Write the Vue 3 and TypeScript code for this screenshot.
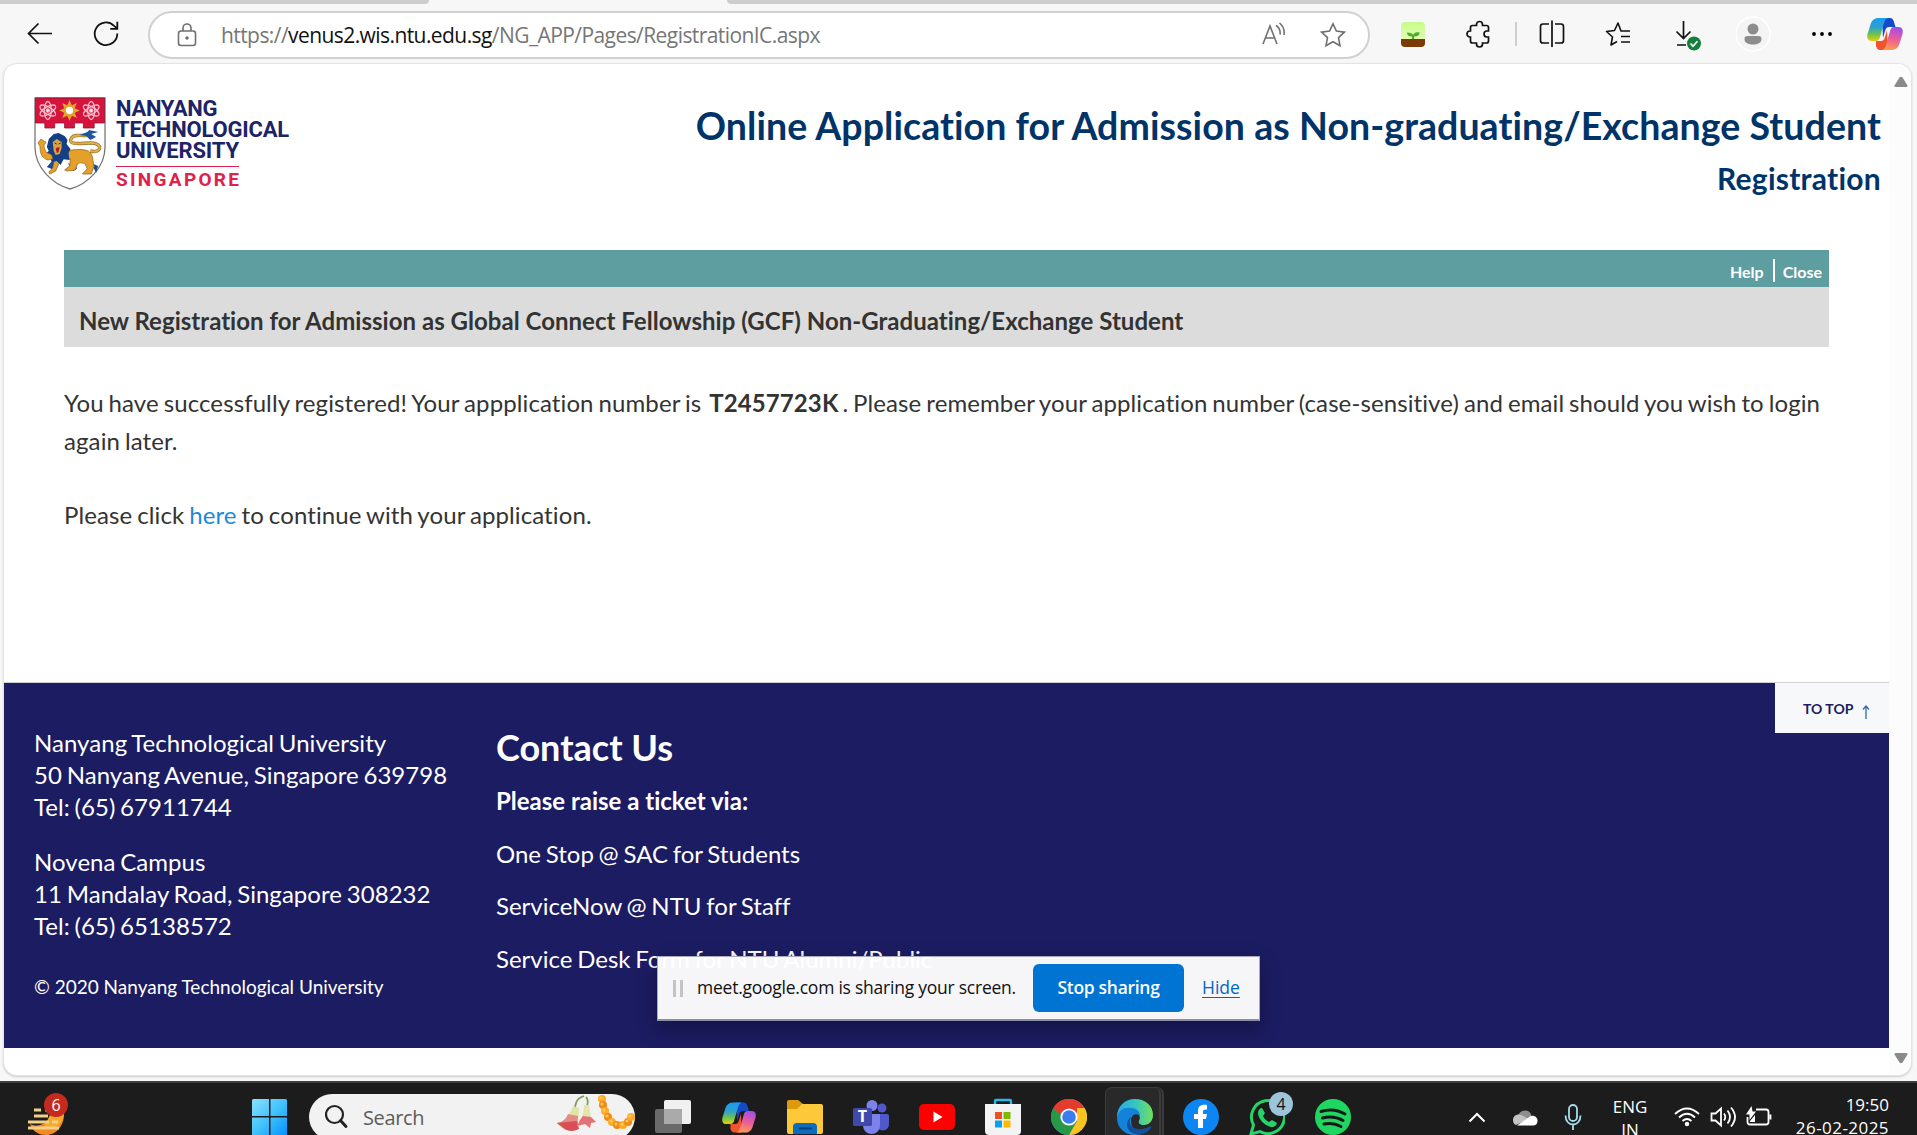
<script setup lang="ts">
const office: string[][] = [
  ['Nanyang Technological University', '50 Nanyang Avenue, Singapore 639798', 'Tel: (65) 67911744'],
  ['Novena Campus', '11 Mandalay Road, Singapore 308232', 'Tel: (65) 65138572'],
]
const tickets: string[] = ['One Stop @ SAC for Students', 'ServiceNow @ NTU for Staff', 'Service Desk Form for NTU Alumni/Public']

// Angles for the crest's atom orbits and sun rays
const petals: number[] = [0, 60, 120]
const rays: number[] = [0, 45, 90, 135, 180, 225, 270, 315]

// Flower centres of the marigold garland in the search box
const garland: number[][] = [[603, 1100], [604, 1106], [606, 1112], [609, 1118], [613, 1123], [618, 1126], [624, 1126], [629, 1123], [632, 1118]]
</script>

<template>
  <div class="screen">
    <div class="tabs"><i class="tab left"></i><i class="tab right"></i></div>
    <header class="toolbar">
      <svg class="ico" width="26" height="26" viewBox="0 0 26 26"><path d="M25 12.5H1.5M11.5 2.5L1.5 12.5l10 10" fill="none" stroke="#111" stroke-width="1.7" /></svg>
      <svg class="ico" width="28" height="28" viewBox="0 0 28 28"><path d="M25.3 13.5A11.3 11.3 0 1 1 21.8 5.6L25 8.4M25.3 1.8v7h-7" fill="none" stroke="#111" stroke-width="1.8" /></svg>
      <div class="address">
        <svg class="lock" width="20" height="24" viewBox="0 0 20 24"><rect x="1.5" y="8" width="17" height="14.5" rx="2.5" /><path d="M6 8V5a4 4 0 0 1 8 0v3" /><circle cx="10" cy="15" r="1" /></svg>
        <span class="url">https://<b>venus2.wis.ntu.edu.sg</b>/NG_APP/Pages/RegistrationIC.aspx</span>
        <svg class="read" width="26" height="26" viewBox="0 0 26 26"><path d="M2 22L9 4l7 18M4.500 16h9M15 3.500a9 9 0 0 1 4 9M18.500 1a13 13 0 0 1 4.500 12" /></svg>
        <svg class="star" width="26" height="26" viewBox="0 0 26 26"><path d="M13 1.800l3.400 7.300 8 1-5.900 5.500 1.500 8L13 19.700l-7 3.900 1.500-8-5.900-5.500 8-1z" /></svg>
      </div>
      <svg class="ico plant" width="26" height="26" viewBox="0 0 26 26"><defs><linearGradient id="pg" x2="0" y2="1"><stop stop-color="#c8fb86" /><stop offset="1" stop-color="#e9ffc9" /></linearGradient></defs><rect x="1" y="1" width="24" height="24" rx="4" fill="url(#pg)" /><path d="M1 18h24v4a4 4 0 0 1-4 4H5a4 4 0 0 1-4-4z" fill="#7a3b06" /><path d="M12 18v-2.500c-3.500 0-5-1.500-5-4 3.500 0 5.500 1 6.200 2.500.6-2 2.600-3 6.300-2.500 0 3-2.200 4-5.500 4V18z" fill="#4cae2a" /></svg>
      <svg class="ico" width="26" height="28" viewBox="0 0 26 28"><path d="M4.500 11V7.500a2 2 0 0 1 2-2h4v-1a3 3 0 0 1 6 0v1h4a2 2 0 0 1 2 2V11H21a3 3 0 0 0 0 6h1.500v4a2 2 0 0 1-2 2h-4v1a3 3 0 0 1-6 0v-1h-4a2 2 0 0 1-2-2v-4H4a3 3 0 0 1 0-6z" fill="none" stroke="#111" stroke-width="1.700" /></svg>
      <i class="divider"></i>
      <svg class="ico" width="26" height="28" viewBox="0 0 26 28"><path d="M10 4H4Q1.500 4 1.500 6.500v14Q1.500 23 4 23h6M16 4h6q2.500 0 2.500 2.500v14Q24.500 23 22 23h-6M13 .5v26.500" fill="none" stroke="#111" stroke-width="1.700" /></svg>
      <svg class="ico" width="26" height="26" viewBox="0 0 26 26"><path d="M25 10h-9l-3-8-3.500 7.500-8 1 6 5.500L6 24l6-3.500M16 15.500h9M16 21h9" fill="none" stroke="#111" stroke-width="1.600" stroke-linejoin="round" /></svg>
      <svg class="ico" width="34" height="34" viewBox="0 0 34 34"><path d="M14.500 4v17M7.500 14.500l7 7 7-7M8 28h9" fill="none" stroke="#111" stroke-width="1.700" /><circle cx="25" cy="26.500" r="7" fill="#14803c" /><path d="M21.500 26.500l2.500 2.700 4.500-5" fill="none" stroke="#fff" stroke-width="1.700" /></svg>
      <svg class="ico" width="36" height="36" viewBox="0 0 36 36"><circle cx="17" cy="18" r="17" fill="#f4f4f4" stroke="#fff" stroke-width="1.500" /><circle cx="17" cy="13" r="5.500" fill="#8c8c8c" /><path d="M8.500 23q0-3 3-3h11q3 0 3 3c0 4-4 5.500-8.500 5.500S8.500 27 8.500 23z" fill="#8c8c8c" /></svg>
      <svg class="ico" width="24" height="8" viewBox="0 0 24 8"><circle cx="4" cy="4" r="1.900" /><circle cx="12" cy="4" r="1.900" /><circle cx="20" cy="4" r="1.900" /></svg>
      <svg class="ico" width="36" height="32" viewBox="0 0 36 32"><use href="#copilot" /></svg>
    </header>

    <main class="page">
      <div class="content">
        <div class="masthead">
          <div class="logo">
            <svg width="73" height="94" viewBox="0 0 74 94" preserveAspectRatio="none">
              <path d="M1 1h71v49c0 20-17 37-35.500 42C18 87 1 70 1 50z" fill="#fff" stroke="#777" stroke-width="1.300" />
              <path d="M1.500 1h70v25H61v5H50v-5H41v5H31v-5H21v5H11v-5H1.500z" fill="#d5133c" stroke="#8c1730" stroke-width=".8" />
              <g v-for="x in [14, 58]" :key="x" fill="none" stroke="#f2bcc8" stroke-width="1.300">
                <ellipse v-for="p in petals" :key="p" :cx="x" cy="13.500" rx="3.600" ry="9" :transform="`rotate(${p} ${x} 13.5)`" />
                <circle :cx="x" cy="13.500" r="1.600" fill="#fff" />
              </g>
              <path v-for="r in rays" :key="r" d="M34 8l2-5 2 5z" fill="#e9a929" :transform="`rotate(${r} 36 13.5)`" />
              <circle cx="36" cy="13.500" r="5" fill="#fff" stroke="#e0a12a" stroke-width="2.600" />
              <path d="M57 54c12 3 13-8 1-8-9 0-25 3-20-5 3-5 14-1 20-3" fill="none" stroke="#8c7434" stroke-width="3.400" />
              <path d="M57 54c12 3 13-8 1-8-9 0-25 3-20-5 3-5 14-1 20-3" fill="none" stroke="#e5ae45" stroke-width="2" />
              <path d="M46 38l8-3 2-2 9 2-7 2 5 3-6 3-4-4z" fill="#1f559e" />
              <path d="M20 62l-7 8 5 2 6-5zM34 66l6 8 4-3zM58 66l5 10 2-7z" fill="#1b4c92" />
              <path d="M27 55c10-2 21-4 28-1 6 4 4 10 6 15l-3 8-9 0 5-5-2-5c-5-2-6-1-8 0l-2 6-8 1-3-1 5-4 1-7h-7l-5 5-3 7-6 3-1-2 4-4 2-10z" fill="#e4a02a" stroke="#8a5b1d" stroke-width=".7" />
              <path d="M15 42l5-5 5-1 6 3 3 4-1 4 4 5-2 4 1 7-6-1-3 6-4-4-5 1-2-5-5-3 4-3-2-4z" fill="#123f86" />
              <path d="M4 46l3-4 3 2 2 1-2 4 2 6 6 3 1 4-5 1c-6-2-8-6-8-14z" fill="#e4a02a" stroke="#8a5b1d" stroke-width=".6" />
              <path d="M19 45l4-3 5 3v6l-2 6-4 1-2-4z" fill="#dda33a" /><path d="M22 51l4-1-1 5-2 1z" fill="#a91d35" /><path d="M21 46l2 1m2 0l2-1" stroke="#182653" />
            </svg>
            <div class="wordmark">
              <span class="n1">NANYANG</span>
              <span class="n2">TECHNOLOGICAL</span>
              <span class="n3">UNIVERSITY</span>
              <i></i>
              <span class="n4">SINGAPORE</span>
            </div>
          </div>
          <div class="titles">
            <h1>Online Application for Admission as Non-graduating/Exchange Student</h1>
            <h2>Registration</h2>
          </div>
        </div>
        <section class="panel">
          <nav><a>Help</a><i></i><a>Close</a></nav>
          <h3>New Registration for Admission as Global Connect Fellowship (GCF) Non-Graduating/Exchange Student</h3>
        </section>
        <section class="message">
          <p class="lead">You have successfully registered! Your appplication number is <b>T2457723K</b> . Please remember your application number (case-sensitive) and email should you wish to login again later.</p>
          <p>Please click <a>here</a> to continue with your application.</p>
        </section>
        <footer class="footer">
          <div class="address-col">
            <p v-for="block in office" :key="block[0]"><span v-for="line in block" :key="line">{{ line }}</span></p>
            <small>© 2020 Nanyang Technological University</small>
          </div>
          <div class="contact-col">
            <h4>Contact Us</h4>
            <strong>Please raise a ticket via:</strong>
            <a v-for="t in tickets" :key="t">{{ t }}</a>
          </div>
          <div class="totop"><span>TO TOP</span><svg width="8" height="14" viewBox="0 0 8 14"><path d="M4 14V1.500M1 4.500L4 1l3 3.500" /></svg></div>
        </footer>
      </div>
      <div class="scroll">
        <svg width="16" height="12" viewBox="0 0 16 12"><path d="M6.500 1.500q1.500-1.500 3 0l5 8q.5 1.500-1.500 1.500H3q-2 0-1.500-1.500z" /></svg>
        <svg width="16" height="12" viewBox="0 0 16 12"><path d="M6.500 10.500q1.500 1.500 3 0l5-8Q15 1 13 1H3Q1 1 1.500 2.500z" /></svg>
      </div>
    </main>

    <aside class="share">
      <i class="grip"></i>
      <span class="msg">meet.google.com is sharing your screen.</span>
      <button>Stop sharing</button>
      <a>Hide</a>
    </aside>

    <div class="taskbar">
      <div class="bar">
        <div class="widget"><svg width="46" height="48" viewBox="26 1091 46 48"><path d="M30 1122c8 4 20 0 22-13h12c1 14-7 24-18 24-9 0-14-5-16-11z" fill="#f08a24" /><path d="M52 1109h12c0 9-4 14-8 16H44z" fill="#f3ab2c" /><path d="M34 1108h7m4 0h4M34 1114h14M28 1120h21m3 0h6M28 1126h31" stroke="#f3d08a" stroke-width="3.200" /></svg><b>6</b></div>
        <svg class="win" width="36" height="36" viewBox="0 0 36 36"><defs><linearGradient id="wg" x2="1" y2="1"><stop stop-color="#8be0ff" /><stop offset=".5" stop-color="#42c3fb" /><stop offset="1" stop-color="#0592fb" /></linearGradient></defs><path d="M1.500 0H17v17H0V1.500Q0 0 1.500 0zM18.500 0H33.500Q35 0 35 1.500V17H18.500zM0 18.500h17V36H0zM18.500 18.500H35V36H18.500z" fill="url(#wg)" /></svg>
        <div class="search">
          <svg width="24" height="26" viewBox="0 0 24 26"><circle cx="9.500" cy="10.500" r="8.500" fill="none" stroke="#222" stroke-width="2.200" /><path d="M15.500 16.500l5.500 6" stroke="#222" stroke-width="3" stroke-linecap="round" /></svg>
          <span>Search</span>
          <svg class="flora" width="80" height="38" viewBox="556 1096 80 38">
            <path d="M585 1097c-7 2-8 6-9 11M587 1098c3 3 2 6 1 9" fill="none" stroke="#7f9f55" stroke-width="1.800" />
            <path d="M574 1107l6 2c0 9-1 14-2 19-7 4-15 4-20-4 10-2 13-10 16-17z" fill="#dfe6a5" /><path d="M569 1115l10 2-1 13c-7 2-11 2-14-1l-6-5c6-1 9-4 11-9z" fill="#e58b86" /><path d="M558 1124l20-2 2 8c-6 3-11 2-14 0z" fill="#d84f58" />
            <path d="M585 1106h5l2 12 5 5-5 1-1 5-5-4-8 2 3-6c3-4 4-9 4-15z" fill="#e3e6ab" /><path d="M584 1117l8 1 5 5-5 1-1 5-5-4-8 2 3-6z" fill="#e4707a" />
            <g v-for="(g, i) in garland" :key="i"><circle :cx="g[0]" :cy="g[1]" r="4" :fill="i % 2 ? '#f08a12' : '#ffaa24'" /><circle :cx="g[0] - 1" :cy="g[1] - 1" r="1.600" fill="#ffc75c" /></g>
          </svg>
        </div>
        <div class="apps">
          <div><svg width="36" height="36" viewBox="0 0 36 36"><rect x="9" y="1" width="27" height="24" rx="2" fill="#f0f0f0" /><rect x="0" y="10" width="27" height="24" rx="2" fill="#6a6a6a" /><path d="M9 10h18v15H9z" fill="#aaa" /></svg></div>
          <div><svg width="34" height="31" viewBox="0 0 36 32">
            <defs>
              <linearGradient id="ca" x1=".3" y1="0" x2=".3" y2="1"><stop stop-color="#199cf2" /><stop offset=".4" stop-color="#2d9fd0" /><stop offset=".7" stop-color="#6bc24d" /><stop offset="1" stop-color="#f0cb0c" /></linearGradient>
              <linearGradient id="cb" x1=".6" y1="0" x2=".4" y2="1"><stop stop-color="#a04ee6" /><stop offset=".5" stop-color="#ea5c9a" /><stop offset="1" stop-color="#ff9950" /></linearGradient>
            </defs>
            <g id="copilot"><path d="M15 0h8q3 0 4 4l1.500 5H22q-3 0-4 4l-2 7z" fill="#144bc8" /><path d="M9 23h5q3 0 4-4l2-7 1 20h-8q-3 0-4-4z" fill="#f1542d" /><path d="M12 0h9q-3 1-4 5l-4 14q-1 4-4 4H5q-6 0-4.500-7L4 5q2-5 8-5z" fill="url(#ca)" /><path d="M24 32h-9q3-1 4-5l4-14q1-4 4-4h4q6 0 4.500 7L32 27q-2 5-8 5z" fill="url(#cb)" /></g>
          </svg></div>
          <div><svg width="36" height="34" viewBox="0 0 36 34"><path d="M0 2Q0 0 2 0h9l5 4-3 6H0z" fill="#dd9a0b" /><path d="M0 9h10l5-5h19q2 0 2 2v26q0 2-2 2H2q-2 0-2-2z" fill="#fdc839" /><path d="M6 34V27q0-4 4-4h16q4 0 4 4v7z" fill="#0c6cbd" /><path d="M12 28.500h13" stroke="#063f79" stroke-width="2" /></svg></div>
          <div><svg width="36" height="34" viewBox="0 0 36 34"><circle cx="29" cy="8" r="4.500" fill="#5059c9" /><circle cx="19" cy="5.500" r="5.500" fill="#7b83eb" /><path d="M25 14h9q2 0 2 2v8c0 6-6 8-11 5z" fill="#5059c9" /><path d="M10 14h17v11c0 12-17 12-17 0z" fill="#7b83eb" /><rect y="8" width="19" height="18" rx="1.500" fill="#4048ac" /><text x="9.500" y="22" text-anchor="middle" class="t">T</text></svg></div>
          <div><svg width="36" height="26" viewBox="0 0 36 26"><rect width="36" height="26" rx="5" fill="#f00" /><path d="M14.500 7.500l9 5.500-9 5.500z" fill="#fff" /></svg></div>
          <div><svg width="36" height="38" viewBox="0 0 36 38"><path d="M10 8V3q0-1 1-1h14q1 0 1 1v5" fill="none" stroke="#29b8ee" stroke-width="2.400" /><path d="M0 6h36v27q0 4-4 4H4q-4 0-4-4z" fill="#f3f3f3" /><path d="M10 14h7v7h-7z" fill="#f25022" /><path d="M18.500 14h7v7h-7z" fill="#7fba00" /><path d="M10 22.500h7v7h-7z" fill="#00a4ef" /><path d="M18.500 22.500h7v7h-7z" fill="#ffb900" /></svg></div>
          <div><svg width="36" height="36" viewBox="0 0 36 36"><circle cx="18" cy="18" r="18" fill="#4285f4" /><path d="M18 18L2.400 9A18 18 0 0 1 33.600 9z" fill="#e33b2e" /><path d="M2.400 9A18 18 0 0 0 18 36l8-13.500L18 18z" fill="#279847" /><path d="M2.400 9l7.800 13.500L18 18l-6-8z" fill="#279847" /><path d="M33.600 9A18 18 0 0 1 18 36l7.800-13.500L26 9z" fill="#fcc31e" /><path d="M2.400 9A18 18 0 0 1 33.600 9H18l-9 6z" fill="#e33b2e" /><circle cx="18" cy="18" r="8.600" fill="#fff" /><circle cx="18" cy="18" r="6.800" fill="#3b7ded" /></svg></div>
          <div class="active"><svg width="36" height="36" viewBox="0 0 36 36"><defs><linearGradient id="eg" x2="1"><stop stop-color="#2aa7e8" /><stop offset=".5" stop-color="#35c5c4" /><stop offset="1" stop-color="#73e05a" /></linearGradient></defs><path d="M0 18C0 7 8 0 18 0c11 0 18 7 18 16 0 6-4 10-9 10-4 0-6-2-5-4 3-6-2-10-8-10-7 0-11 3-14 6z" fill="url(#eg)" /><path d="M0 19c1-8 8-11 14-10 5 0 9 3 9 8-4-4-9-1-9 5 0 8 7 13 13 12-3 1-6 2-9 2C8 36 0 29 0 19z" fill="#1482d8" /><path d="M14 18c-5 8 4 16 18 10 2-1 3 0 2 1C27 39 11 37 10 26c0-4 2-7 4-8z" fill="#114f9f" /></svg></div>
          <div><svg width="36" height="36" viewBox="0 0 36 36"><circle cx="18" cy="18" r="18" fill="#0c86f3" /><path d="M15 29V20h-4v-5h4v-3c0-5 3-7 9-6v4.500c-3-.3-4 .4-4 2.500v2h4l-1 5h-3v9z" fill="#fff" /></svg></div>
          <div class="wa"><svg width="36" height="38" viewBox="0 0 36 38"><path d="M2 36l2.500-9A16.500 16.500 0 1 1 11 33.500z" fill="none" stroke="#25d366" stroke-width="3" /><path d="M13 10l3 5-2 3c1 3 4 5 6 6l3-2 5 3c-1 4-4 4-6 4C16 28 9 21 9 15c0-3 2-5 4-5z" fill="#25d366" /></svg><b>4</b></div>
          <div><svg width="36" height="36" viewBox="0 0 36 36"><circle cx="18" cy="18" r="18" fill="#1ed760" /><path d="M6 12.500q13-4 24 2.500M7.500 19q11-3 20.500 2.500M9 25q9-2 17 2.500" fill="none" stroke="#181818" stroke-width="3" stroke-linecap="round" /></svg></div>
        </div>
        <div class="tray">
          <svg width="18" height="12" viewBox="0 0 18 12"><path d="M1.500 10.500L9 3l7.500 7.500" fill="none" stroke="#fff" stroke-width="2" /></svg>
          <svg width="26" height="18" viewBox="0 0 26 18"><path d="M6 9a7 7 0 0 1 13-3l1 5H6z" fill="#8e8e8e" /><path d="M1 12a5.500 5.500 0 0 1 8-5l8 4-13 6q-3-1-3-5z" fill="#c4c4c4" /><path d="M5 17.500l13-9c4-2 8 1 7.500 5q-.5 4-4.500 4z" fill="#fff" /></svg>
          <svg width="18" height="26" viewBox="0 0 18 26"><rect x="5" y="1" width="8" height="16" rx="4" /><path d="M1.500 11.500c0 12 15 12 15 0M9 20.500V26" /></svg>
          <div class="lang"><span>ENG</span><span>IN</span></div>
          <svg width="26" height="20" viewBox="0 0 26 20" class="wh"><path d="M1 7q12-11 24 0M5 10.500q8-7.500 16 0M8.500 14q4.500-4 9 0" /><circle cx="13" cy="17" r="1.300" fill="#fff" /></svg>
          <svg width="26" height="22" viewBox="0 0 26 22" class="wh"><path d="M1.500 7.500h4L11 2.500v17l-5.500-5h-4zM14 7.500q2.500 3.500 0 7M17.500 4.500q5 6.500 0 13M21 1.500q8 9.500 0 19" /></svg>
          <svg width="26" height="22" viewBox="0 0 26 22" class="wh"><path d="M10 3.500h10q2.500 0 2.500 2.500v10q0 2.500-2.500 2.500H4Q1.500 18.500 1.500 16v-5M24.500 8.500v5" /><path d="M5.500 0L0 8.500h3.500V14L10 5.500H6.500zM4 15l5-6v7H4z" fill="#fff" stroke="none" /></svg>
          <div class="clock"><span>19:50</span><span class="date">26-02-2025</span></div>
        </div>
      </div>
    </div>
  </div>
</template>

<style>
html, body { margin: 0; overflow: hidden; }
</style>

<style scoped>
.screen { position: relative; width: 1917px; height: 1135px; overflow: hidden; background: #f7f7f7; font-family: Lato, sans-serif; font-variant-ligatures: none; color: #333; display: flex; flex-direction: column; }
.screen * { box-sizing: border-box; }
h1, h2, h3, h4, p { margin: 0; }
svg { display: block; flex: none; }
.tabs { height: 4px; flex: none; display: flex; justify-content: space-between; }
.tab { background: #cdcdcd; height: 4px; }
.tab.left { width: 429px; border-radius: 0 0 6px 0; }
.tab.right { width: 1190px; border-radius: 0 0 0 6px; }
.toolbar { height: 59px; flex: none; display: grid; grid-template-columns: 80px 52px 1254px 60px 66px 8px 64px 68px 68px 68px 68px 58px; align-items: center; justify-items: center; }
.toolbar > .plant { margin-left: -6px; }
.address { width: 1222px; height: 48px; margin: 2px 0 0; border: 2px solid #d1d1d1; border-radius: 24px; background: #fff; display: flex; align-items: center; padding-left: 27px; }
.address svg { fill: none; stroke: #707070; stroke-width: 1.6; }
.lock circle { fill: #707070; }
.url { margin-left: 24px; font: 21px/30px "Open Sans", "Noto Sans", sans-serif; color: #767676; white-space: nowrap; flex: 0 0 1040px; letter-spacing: -0.575px; }
.url b { font-weight: 400; color: #111; }
.address .star { margin-left: 33px; }
.divider { width: 2px; height: 24px; background: #cfcfcf; }
.page { margin: 0 5px 0 3px; height: 1013px; flex: none; background: #fff; border: 1px solid #e4e4e4; border-radius: 14px; display: flex; overflow: hidden; box-shadow: 0 1px 2px #ccc; }
.content { width: 1885px; flex: none; display: flex; flex-direction: column; }
.scroll { flex: 1; background: #fcfcfc; display: flex; flex-direction: column; justify-content: space-between; align-items: center; padding: 12px 0 11px 2px; }
.scroll svg { fill: #8a8a8a; }
.masthead { height: 186px; flex: none; display: flex; justify-content: space-between; padding: 33px 8px 0 30px; }
.logo { display: flex; }
.wordmark { margin-left: 9px; padding-top: 1px; color: #1d2466; font: 700 22px/21.200px Roboto, sans-serif; letter-spacing: -.3px; display: flex; flex-direction: column; align-items: flex-start; white-space: nowrap; }
.wordmark i { width: 123px; height: 1px; background: #e0214b; margin-top: 4px; }
.wordmark .n2 { letter-spacing: -.2px; }
.wordmark .n3 { letter-spacing: -.14px; }
.wordmark .n4 { color: #e0214b; font-size: 19px; line-height: 26px; letter-spacing: 2.300px; }
.titles { text-align: right; color: #003469; padding-top: 6px; white-space: nowrap; }
h1 { font-size: 37.500px; line-height: 46px; letter-spacing: .065px; }
h2 { font-size: 30px; line-height: 36px; margin-top: 11px; letter-spacing: .24px; }
.panel { margin: 0 60px; height: 97px; flex: none; background: #dcdcdc; }
.panel nav { height: 37px; background: #5f9ea0; display: flex; justify-content: flex-end; padding: 9px 7px 0 0; color: #fff; font: 700 16px/26px Lato, sans-serif; }
.panel nav i { width: 2px; height: 23px; background: #fff; margin: 0 8px 0 9px; }
h3 { font-size: 24px; line-height: 32px; padding: 18px 0 0 15px; letter-spacing: .025px; }
.message { height: 335px; flex: none; padding: 37px 60px 0; font-size: 24px; line-height: 38px; word-spacing: -1.300px; letter-spacing: .1px; }
.message p + p { margin-top: 36px; }
.message .lead b { margin: 0 -1px 0 3px; }
.message a { color: #1a8ad6; }
.footer { position: relative; height: 366px; flex: none; background: #1c1c62; border-top: 1px solid #d0d0d4; color: #fff; display: flex; padding: 44px 0 0 30px; font-size: 24px; line-height: 32px; white-space: nowrap; word-spacing: -1.400px; }
.address-col { width: 462px; flex: none; }
.address-col p { margin-bottom: 23px; letter-spacing: .04px; }
.address-col p > span { display: block; }
small { display: block; font-size: 19px; margin-top: 29px; word-spacing: 0; }
.contact-col { display: flex; flex-direction: column; }
h4 { font-size: 36px; line-height: 44px; margin-top: -2px; word-spacing: 0; }
strong { margin: 16px 0 21px; word-spacing: 0; }
.contact-col a { margin-bottom: 20.300px; }
.totop { position: absolute; right: 0; top: 0; width: 114px; height: 50px; background: #f6f8fa; color: #1c1c62; display: flex; align-items: center; padding: 2px 0 0 28px; font-size: 14px; font-weight: 700; word-spacing: 0; }
.totop svg { margin: 5px 0 0 9px; fill: none; stroke: #3468b0; stroke-width: 1.300; }
.share { position: absolute; left: 657px; top: 956px; width: 603px; height: 65px; background: rgba(255, 255, 255, .96); border: 1px solid #a9a9be; border-bottom: 2px solid #8c8cab; box-shadow: 0 8px 18px rgba(10, 10, 40, .45); display: flex; align-items: center; font: 17.500px/24px "Open Sans", "Noto Sans", sans-serif; color: #111; white-space: nowrap; }
.grip { width: 10px; height: 17px; margin: 0 14px 0 15px; border: solid #c4c4c6; border-width: 0 3px; }
.msg { width: 336px; flex: none; letter-spacing: -.24px; margin-top: -2px; }
.share button { width: 151px; height: 48px; padding: 0 0 2px; border: 0; border-radius: 6px; background: #0074d2; color: #fff; font: 600 17.500px/24px "Open Sans", sans-serif; letter-spacing: -.3px; }
.share a { margin: -2px 0 0 18px; color: #0067c0; text-decoration: underline; text-underline-offset: 3px; }
.taskbar { margin-top: 5px; height: 54px; flex: none; overflow: hidden; background: #1c1c1c; border-top: 2px solid #3f3f3f; font-family: "Open Sans", "Noto Sans", sans-serif; }
.bar { height: 68px; display: flex; align-items: center; }
.widget { position: relative; width: 252px; flex: none; padding-left: 26px; }
.widget b, .wa b { position: absolute; left: 44px; top: 0; width: 24px; height: 24px; border-radius: 50%; background: #c42b1c; color: #fff; font: 16px/24px "Open Sans", sans-serif; text-align: center; }
.search { width: 326px; height: 46px; flex: none; margin: 0 5px 0 21px; border-radius: 23px; background: #f2f2f2; display: flex; align-items: center; padding-left: 16px; font-size: 20px; color: #5c5c5c; }
.search span { margin: 0 0 0 14px; width: 193px; letter-spacing: -.35px; }
.flora { margin-top: -6px; }
.apps { display: grid; grid-template-columns: repeat(11, 66px); height: 68px; flex: none; }
.apps > div { display: flex; align-items: center; justify-content: center; position: relative; }
.apps .active { margin: 4px 4px 4px 3px; padding-left: 5px; background: #292929; border: 1px solid #3b3b3b; border-right: 5px double #3b3b3b; border-radius: 7px; }
.apps .wa b { left: 35px; top: 9px; background: #9cc5dc; color: #111; }
.t { font: 700 16px "Open Sans", sans-serif; fill: #fff; }
.tray { margin-left: 87px; display: grid; grid-template-columns: 48px 48px 48px 66px 6px 36px 36px 36px 112px; align-items: center; justify-items: center; color: #fff; font-size: 17px; line-height: 23px; }
.tray > svg:nth-child(3) { fill: none; stroke: #a9dcec; stroke-width: 1.800; }
.tray .wh { fill: none; stroke: #fff; stroke-width: 1.800; }
.tray .wh:nth-child(5) { grid-column: 6; }
.lang, .clock { display: flex; flex-direction: column; align-items: center; }
.lang { margin-top: 1px; }
.clock { justify-self: end; align-items: flex-end; margin-top: -2px; }
.date { letter-spacing: .45px; }
</style>
